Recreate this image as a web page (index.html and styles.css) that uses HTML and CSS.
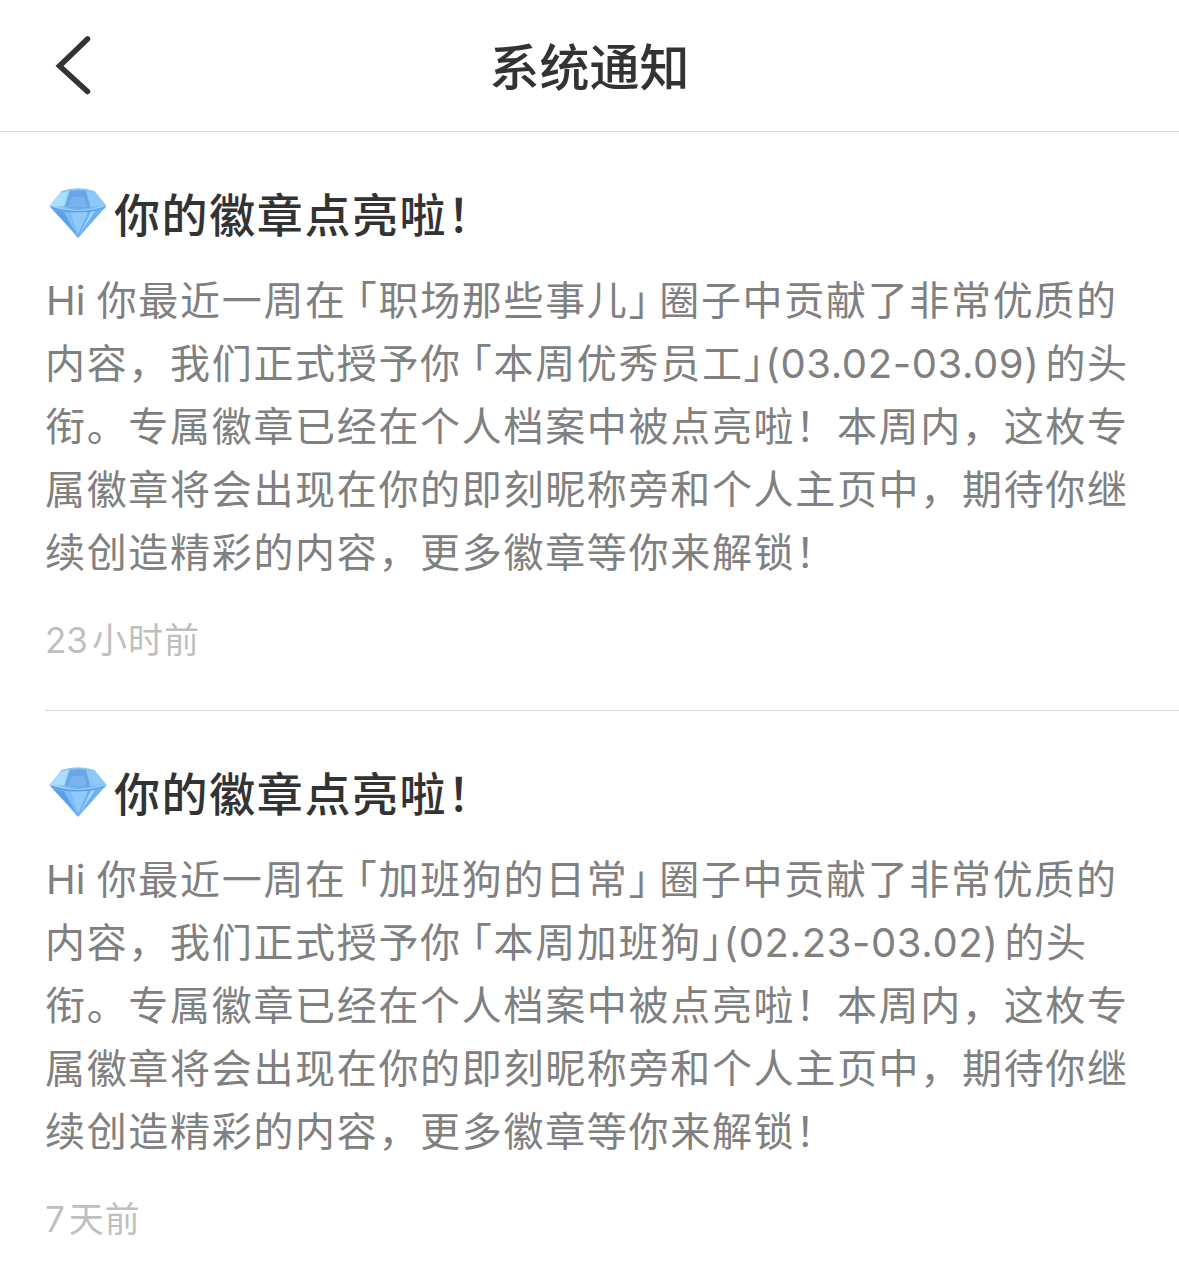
FILE: index.html
```
<!DOCTYPE html>
<html lang="zh-CN">
<head>
  <meta charset="UTF-8">
  <title>系统通知</title>
  <meta name="viewport" content="width=device-width, initial-scale=1.0">
  <link rel="stylesheet" href="styles.css">
</head>
<body>
  <svg width="0" height="0" class="defs">
    <defs>
      <linearGradient id="gemBottom" x1="0" y1="0" x2="1" y2="1">
        <stop offset="0" stop-color="#62a8ec"/>
        <stop offset="0.5" stop-color="#86c3f7"/>
        <stop offset="1" stop-color="#4a8fdc"/>
      </linearGradient>
      <linearGradient id="gemTop" x1="0" y1="0" x2="1" y2="0">
        <stop offset="0" stop-color="#a0dafa"/>
        <stop offset="0.5" stop-color="#6bacec"/>
        <stop offset="1" stop-color="#8ccbf8"/>
      </linearGradient>
    </defs>
    <symbol id="gem" viewBox="0 0 58 50">
      <path d="M12 4Q29-2 46 4L57.500 18L29 50L.5 18Z" fill="url(#gemBottom)"/>
      <path d="M12 4Q29-2 46 4L57.500 18Q29 29 .5 18Z" fill="url(#gemTop)"/>
      <path d="M12 4L20 3L15 18L.5 18Z" fill="#a9dffb"/>
      <path d="M21 3H37L41 20Q29 21 16 19Z" fill="#6aa5e6"/>
      <path d="M23 9H35L38 19Q29 20 19 19Z" fill="#7ab4ee"/>
      <path d="M37 3L46 4L54 16L42 19Z" fill="#8cc9f8"/>
      <path d="M1 18Q29 28 57 18L55 21Q29 28 3 21Z" fill="#5b9ee6"/>
      <path d="M2 18Q29 27 56 18" fill="none" stroke="#a6d9fb" stroke-width=".8"/>
      <path d="M4 22L27 46L15 24Z" fill="#5b9fe9"/>
      <path d="M15 24L28 47L22 25Z" fill="#7dbcf5"/>
      <path d="M22 25L29 47L39 24Z" fill="#8ec9f9"/>
      <path d="M39 24L30 48L55 20Z" fill="#6fb0f0"/>
      <path d="M46 23L31 46L42 24Z" fill="#a5d9fc"/>
      <path d="M12 4Q29-2 46 4" fill="none" stroke="#8fc6ee" stroke-width="1.500"/>
    </symbol>
  </svg>

  <header class="navbar">
    <a class="back" href="#" aria-label="返回">
      <svg width="40" height="64" viewBox="0 0 40 64">
        <path d="M32.500 5L4.500 32L32.500 57.500" fill="none" stroke="#333" stroke-width="5.500" stroke-linecap="round"/>
      </svg>
    </a>
    <h1>系统通知</h1>
  </header>

  <main>
    <article class="notice">
      <h2><svg class="gem"><use href="#gem"/></svg>你的徽章点亮啦！</h2>
      <p class="content">
        <span class="hi">Hi </span>你最近一周在<span class="open">「</span>职场那些事儿<span class="close">」</span>圈子中贡献了非常优质的<br>
        内容，我们正式授予你<span class="open">「</span>本周优秀员工<span class="close tight">」</span><span class="date">(03.02-03.09)</span>的头<br>
        衔。专属徽章已经在个人档案中被点亮啦！本周内，这枚专<br>
        属徽章将会出现在你的即刻昵称旁和个人主页中，期待你继<br>
        续创造精彩的内容，更多徽章等你来解锁！
      </p>
      <time><span class="num">23</span>小时前</time>
    </article>

    <article class="notice">
      <h2><svg class="gem"><use href="#gem"/></svg>你的徽章点亮啦！</h2>
      <p class="content">
        <span class="hi">Hi </span>你最近一周在<span class="open">「</span>加班狗的日常<span class="close">」</span>圈子中贡献了非常优质的<br>
        内容，我们正式授予你<span class="open">「</span>本周加班狗<span class="close tight">」</span><span class="date">(02.23-03.02)</span>的头<br>
        衔。专属徽章已经在个人档案中被点亮啦！本周内，这枚专<br>
        属徽章将会出现在你的即刻昵称旁和个人主页中，期待你继<br>
        续创造精彩的内容，更多徽章等你来解锁！
      </p>
      <time><span class="num">7</span>天前</time>
    </article>
  </main>
</body>
</html>
```
FILE: styles.css
```
* { box-sizing: border-box; }
body { margin: 0; background: #fff; color: #333; font-family: Inter, "Noto Sans CJK SC", sans-serif; overflow: hidden; }
h1, h2, p { margin: 0; }
.defs { position: absolute; }

.navbar { display: grid; grid-template-columns: 140px 1fr 140px; align-items: center; height: 132px; border-bottom: 1px solid #d9d9d9; }
.navbar h1 { font-family: "Noto Sans CJK SC", sans-serif; font-size: 50px; line-height: 72px; font-weight: 500; text-align: center; padding-bottom: 3px; }
.back { display: flex; padding-left: 55px; }

.notice { height: 579px; margin-left: 45px; padding-top: 47px; border-bottom: 1px solid #d9d9d9; white-space: nowrap; }
.notice:last-child { border-bottom: 0; }
.notice h2 { display: flex; align-items: center; height: 66px; font-family: "Noto Sans CJK SC", sans-serif; font-size: 46px; font-weight: 500; letter-spacing: 1.6px; }
.gem { width: 58px; height: 50px; margin: 2px 7px 0 4px; }

.content { margin-top: 24px; font-size: 40px; line-height: 63px; letter-spacing: 1.68px; color: #808080; }
/* half-width corner brackets */
.open, .close { font-family: "Noto Sans CJK SC", sans-serif; font-feature-settings: "halt"; line-height: 1; }
.open { margin-left: 10px; }
.close { margin-right: 9px; }
.close.tight { margin-right: 0; }
.hi { margin-left: 1px; letter-spacing: 0; }
.date { margin-right: 6px; letter-spacing: 0.6px; }

.notice time { display: block; margin-top: 31px; font-size: 35px; line-height: 50px; letter-spacing: 1px; color: #bfbfbf; }
.num { letter-spacing: 0; margin-right: 4px; }
```
